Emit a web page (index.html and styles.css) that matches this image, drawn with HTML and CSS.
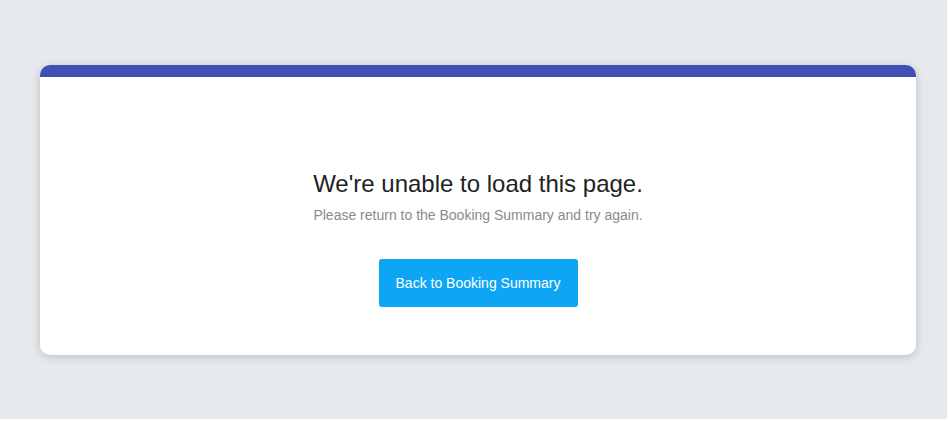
FILE: index.html
```html
<!DOCTYPE html>
<html>
<head>
<meta charset="utf-8">
<link rel="stylesheet" href="styles.css">
</head>
<body>
<div class="page">
  <div class="card">
    <div class="card-top"></div>
    <div class="card-body">
      <h1 class="title">We're unable to load this page.</h1>
      <p class="subtitle">Please return to the Booking Summary and try again.</p>
      <button class="btn">Back to Booking Summary</button>
    </div>
  </div>
</div>
</body>
</html>
```
FILE: styles.css
```css
html, body {
  margin: 0;
  padding: 0;
  background: #ffffff;
  font-family: "Liberation Sans", Arial, sans-serif;
}
.page {
  width: 947px;
  box-sizing: border-box;
  background: #e6eaed;
  padding: 65px 31px 64px 40px;
}
.card {
  background: #ffffff;
  border-radius: 10px;
  overflow: hidden;
  box-shadow: 0 2px 10px rgba(0, 0, 0, 0.18);
}
.card-top {
  height: 12px;
  background: #3f51b5;
}
.card-body {
  display: flex;
  flex-direction: column;
  align-items: center;
  padding: 93px 20px 48px;
}
.title {
  margin: 0;
  font-size: 24px;
  line-height: 28px;
  font-weight: normal;
  color: #222222;
}
.subtitle {
  margin: 7px 0 0;
  font-size: 14px;
  line-height: 20px;
  color: #8a8a8a;
}
.btn {
  margin-top: 34px;
  width: 199px;
  height: 48px;
  border: none;
  border-radius: 3px;
  background: #0ea5f5;
  color: #ffffff;
  font-family: "Liberation Sans", Arial, sans-serif;
  font-size: 14px;
  padding: 0;
}
```
